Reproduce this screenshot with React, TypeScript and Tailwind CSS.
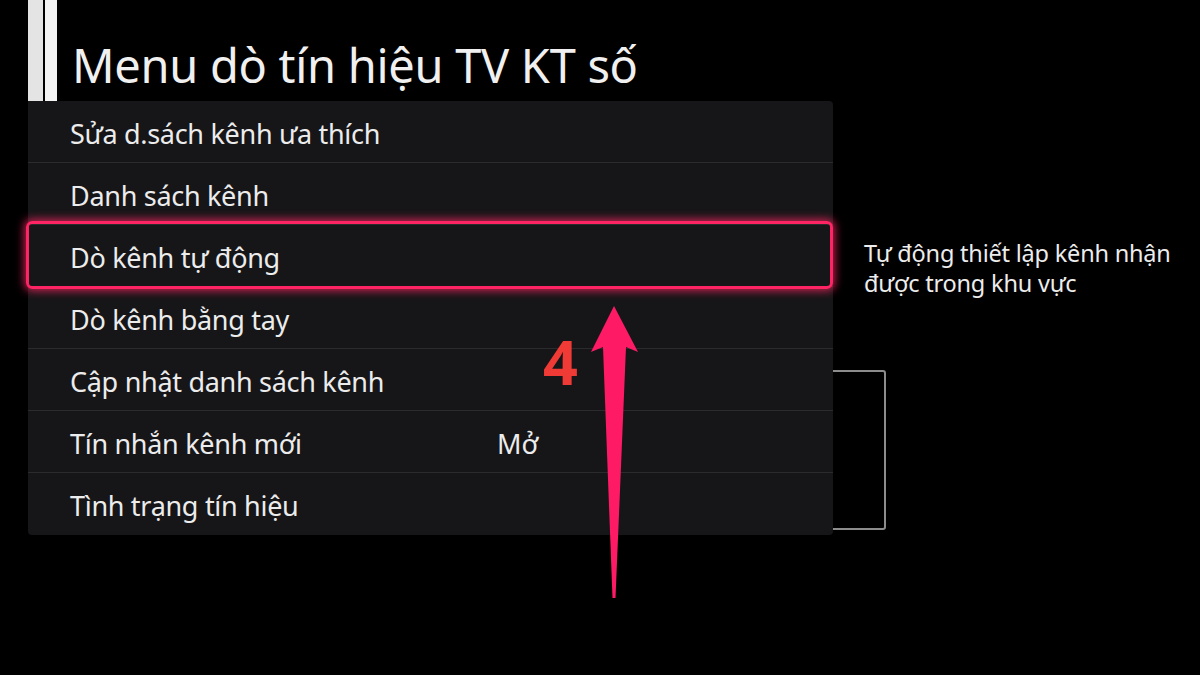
import React from "react";

const rows = [
  { label: "Sửa d.sách kênh ưa thích" },
  { label: "Danh sách kênh" },
  { label: "Dò kênh tự động", selected: true },
  { label: "Dò kênh bằng tay" },
  { label: "Cập nhật danh sách kênh" },
  { label: "Tín nhắn kênh mới", value: "Mở" },
  { label: "Tình trạng tín hiệu" },
];

export default function App() {
  return (
    <div
      className="relative w-[1200px] h-[675px] overflow-hidden bg-black text-[#ececec]"
      style={{ fontFamily: '"Noto Sans", "Open Sans", sans-serif' }}
    >
      {/* Header */}
      <div className="flex h-[101px]">
        <div className="ml-[28px] w-[15px] h-full bg-[#e4e4e4]" />
        <div className="ml-[2px] w-[12px] h-full bg-[#f4f4f4]" />
        <h1 className="ml-[15px] mt-[42px] text-[47px] leading-[47px] font-normal text-[#f0f0f0] tracking-[-0.3px]">
          Menu dò tín hiệu TV KT số
        </h1>
      </div>

      {/* Body */}
      <div className="relative flex">
        {/* Box outline lying behind the panel */}
        <div className="absolute left-[780px] top-[269px] w-[106px] h-[160px] rounded-[3px] border-2 border-[#8c8c8c]" />

        <div className="relative z-10 ml-[28px] w-[805px] flex flex-col rounded-b-[4px] rounded-tr-[4px] bg-[#161618]">
          {rows.map((r, i) => (
            <div
              key={i}
              className={`relative flex items-center h-[62px] pl-[42px] pt-[5px] ${
                i < rows.length - 1 ? "border-b border-[#2b2b2e]" : ""
              }`}
            >
              <span className="text-[27px] tracking-[-0.3px] text-[#ececec] w-[427px]">{r.label}</span>
              {r.value && <span className="text-[27px] text-[#ececec]">{r.value}</span>}
              {r.selected && (
                <div className="absolute -left-[2px] right-0 -top-[4px] -bottom-[3px] rounded-[6px] border-[3px] border-[#ff2463] shadow-[0_0_8px_2px_rgba(255,36,99,0.75)]" />
              )}
            </div>
          ))}
        </div>

        <div className="pl-[31px] pt-[137px] text-[23.5px] leading-[30px] tracking-[-0.2px] text-[#ececec]">
          <p>Tự động thiết lập kênh nhận</p>
          <p>được trong khu vực</p>
        </div>
      </div>

      {/* Annotation: number */}
      <div className="absolute z-20 left-[543px] top-[332px] text-[61px] leading-[60px] font-bold text-[#f03a36]">
        4
      </div>

      {/* Annotation: arrow */}
      <svg className="absolute left-0 top-0 z-20" width="1200" height="675" viewBox="0 0 1200 675">
        <path
          d="M614 306 L638 352 L626 347 L615.5 598 L612.5 598 L603 347 L591 352 Z"
          fill="#ff1a66"
        />
      </svg>
    </div>
  );
}
